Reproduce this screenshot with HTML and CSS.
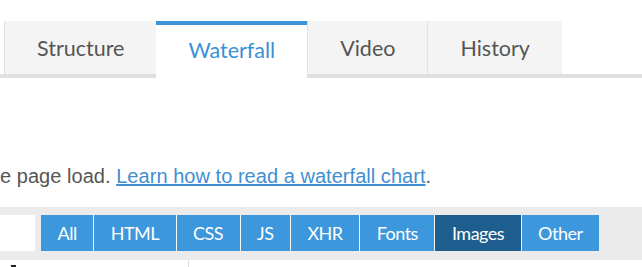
FILE: index.html
```html
<!DOCTYPE html>
<html>
<head>
<meta charset="utf-8">
<link rel="stylesheet" href="styles.css">
</head>
<body>
<nav class="tabs">
  <a class="tab">Structure</a>
  <a class="tab active">Waterfall</a>
  <a class="tab">Video</a>
  <a class="tab">History</a>
</nav>
<p class="intro">e page load. <a class="link" href="#">Learn how to read a waterfall chart</a>.</p>
<div class="filters">
  <div class="search"></div>
  <div class="buttons">
    <span class="btn">All</span>
    <span class="btn">HTML</span>
    <span class="btn">CSS</span>
    <span class="btn">JS</span>
    <span class="btn">XHR</span>
    <span class="btn">Fonts</span>
    <span class="btn selected">Images</span>
    <span class="btn last">Other</span>
  </div>
</div>
<div class="table">
  <div class="col-left"><span class="mark"></span></div>
  <div class="col-right"></div>
</div>
</body>
</html>
```
FILE: styles.css
```css
html, body {
  margin: 0;
  padding: 0;
  background: #fff;
  overflow: hidden;
}
body {
  width: 642px;
  height: 267px;
  font-family: "Liberation Sans", Arial, sans-serif;
}
.tabs {
  display: flex;
  align-items: flex-start;
  margin-top: 21px;
  padding-left: 4px;
  height: 53px;
  border-bottom: 4px solid #e0e0e0;
}
.tab {
  display: flex;
  align-items: center;
  box-sizing: border-box;
  height: 53px;
  padding: 0 32px;
  background: #f4f4f4;
  border-left: 1px solid #e2e2e2;
  font-family: Lato, "Open Sans", sans-serif;
  font-size: 21.5px;
  color: #555;
}
.tab.active {
  height: 57px;
  border-left: none;
  border-top: 4px solid #3d95d9;
  background: #fff;
  color: #3b8fd6;
  padding-bottom: 4px;
}
.intro {
  margin: 0;
  margin-top: 86px;
  font-size: 20px;
  line-height: 24px;
  letter-spacing: 0.04px;
  color: #555;
  white-space: nowrap;
}
.link {
  color: #3f8fd2;
  text-decoration: underline;
}
.filters {
  display: flex;
  align-items: flex-start;
  margin-top: 19px;
  padding: 7px 0 9px;
  background: #ebebeb;
}
.search {
  width: 35px;
  height: 36px;
  margin-top: 1px;
  background: #fff;
}
.buttons {
  display: flex;
  margin-left: 6px;
  margin-top: 1px;
}
.btn {
  display: flex;
  align-items: center;
  height: 36px;
  padding: 0 16.5px;
  background: #3c97dc;
  color: #fff;
  border-right: 1px solid #f4f8fb;
  font-family: Lato, "Open Sans", sans-serif;
  font-size: 18px;
  letter-spacing: -0.5px;
}
.btn.selected {
  background: #1d5e8f;
}
.btn.last {
  border-right: none;
}
.table {
  display: flex;
  height: 40px;
}
.col-left {
  width: 189px;
  border-right: 1px solid #dddddd;
  padding-left: 11px;
  box-sizing: border-box;
}
.mark {
  display: block;
  margin-top: 5px;
  width: 5px;
  height: 2px;
  background: #222;
}
.col-right {
  flex: 1;
}
```
